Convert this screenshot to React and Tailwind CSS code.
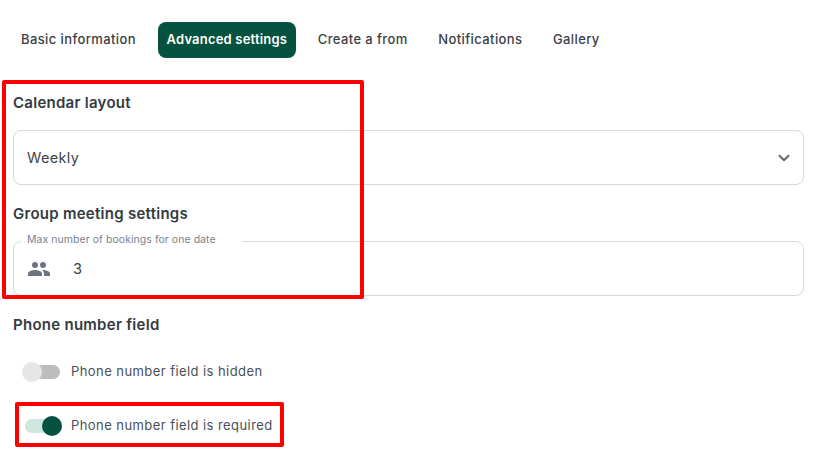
import React from "react";
import { ChevronDown } from "lucide-react";

const tabs = ["Basic information", "Advanced settings", "Create a from", "Notifications", "Gallery"];

function Toggle({ on, label }) {
  return (
    <div className="flex items-center h-[22px]">
      <div className="relative w-[38px] h-[22px] ml-[9px] mr-[11px] shrink-0">
        <div className={`absolute left-[3px] top-[4px] w-[35px] h-[14px] rounded-full ${on ? "bg-[#cde6df]" : "bg-[#bdbdbd]"}`} />
        <div className={`absolute top-px w-[20px] h-[20px] rounded-full ${on ? "left-[20px] bg-[#04523f]" : "left-0 bg-[#e6e6e6]"}`} />
      </div>
      <span className="text-[13px] tracking-[0.43px] text-[#4b4f56]">{label}</span>
    </div>
  );
}

export default function App() {
  return (
    <div className="relative w-[813px] h-[459px] bg-white overflow-hidden font-['Inter',sans-serif] text-[#343a40]">
      {/* tabs */}
      <div className="flex items-center pt-[22px] pl-[12px] gap-[12.5px]">
        {tabs.map((tab) => (
          <div
            key={tab}
            className={`h-[36px] px-[9px] flex items-center rounded-lg text-[13px] font-medium tracking-[0.4px] ${
              tab === "Advanced settings" ? "bg-[#04523f] text-white font-semibold !tracking-[0.2px]" : "text-[#3b4046]"
            }`}
          >
            {tab}
          </div>
        ))}
      </div>

      <div className="px-[13px] w-[804px] box-content">
        <h3 className="mt-[35px] text-[15px] leading-5 font-semibold tracking-[0.27px]">Calendar layout</h3>
        <div className="mt-[17px] h-[55px] w-[791px] border border-[#d5d8de] rounded-lg flex items-center justify-between pl-[13px] pr-[10px]">
          <span className="text-[14.5px] tracking-[0.35px] text-[#3f444c]">Weekly</span>
          <ChevronDown size={18} strokeWidth={2.5} className="text-[#5f6670]" />
        </div>

        <h3 className="mt-[19px] text-[15px] leading-5 font-semibold tracking-[0.27px]">Group meeting settings</h3>
        <div className="relative mt-[17px] h-[55px] w-[791px] border border-[#d5d8de] rounded-lg flex items-center pl-[13px]">
          <span className="absolute -top-[9px] left-[7px] px-[6px] w-[221px] bg-white text-[10.5px] leading-[14px] tracking-[0.05px] text-[#7c828b]">
            Max number of bookings for one date
          </span>
          <svg width="24" height="24" viewBox="0 0 24 24" fill="#6b7280" className="shrink-0">
            <path d="M16 11a3 3 0 1 0 0-6 3 3 0 0 0 0 6zm-8 0a3 3 0 1 0 0-6 3 3 0 0 0 0 6zm0 2c-2.33 0-7 1.17-7 3.5V19h14v-2.5C15 14.17 10.33 13 8 13zm8 0c-.29 0-.62.02-.97.05 1.16.84 1.97 1.97 1.97 3.45V19h6v-2.5c0-2.33-4.67-3.5-7-3.5z" />
          </svg>
          <span className="ml-[22px] text-[14.5px] text-[#343a40]">3</span>
        </div>

        <h3 className="mt-[19px] text-[15px] leading-5 font-semibold tracking-[0.27px]">Phone number field</h3>
        <div className="mt-[26px] flex flex-col gap-[32px]">
          <Toggle on={false} label="Phone number field is hidden" />
          <Toggle on label="Phone number field is required" />
        </div>
      </div>

      {/* red annotation boxes */}
      <div className="absolute left-[2px] top-[80px] w-[362px] h-[219px] border-[4px] border-[#ff0000] rounded-[2px]" />
      <div className="absolute left-[15px] top-[402px] w-[269px] h-[45px] border-[4px] border-[#ff0000] rounded-[2px]" />
    </div>
  );
}
